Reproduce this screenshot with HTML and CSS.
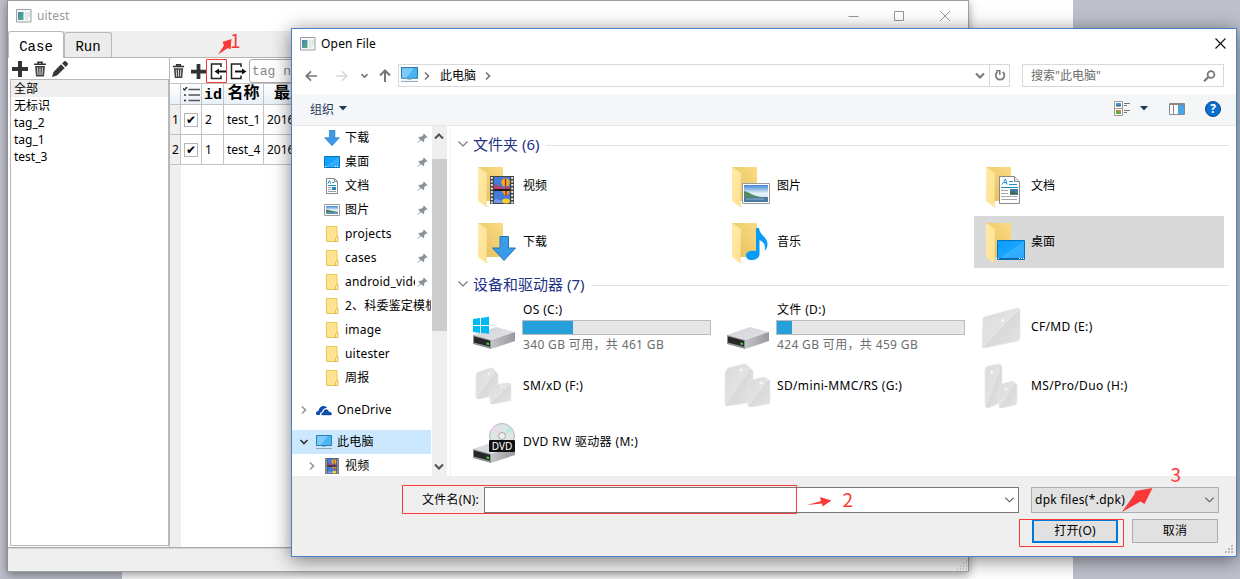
FILE: index.html
```html
<!DOCTYPE html>
<html lang="zh-CN">
<head>
<meta charset="utf-8">
<title>uitest</title>
<link rel="stylesheet" href="styles.css">
</head>
<body>
<svg width="0" height="0" class="defs">
  <defs>
    <linearGradient id="gFold" x1="0" y1="1" x2="1" y2="0"><stop offset="0" stop-color="#e3be5c"/><stop offset="1" stop-color="#fbdc83"/></linearGradient>
    <linearGradient id="gFlap" x1="0" y1="0" x2="1" y2="1"><stop offset="0" stop-color="#ffeaa9"/><stop offset="1" stop-color="#ffe18d"/></linearGradient>
    <linearGradient id="gBlue" x1="0" y1="0" x2="1" y2="1"><stop offset="0" stop-color="#0a9cff"/><stop offset=".5" stop-color="#18a3ff"/><stop offset=".52" stop-color="#35afff"/><stop offset="1" stop-color="#2ca8fb"/></linearGradient>
    <linearGradient id="gSky" x1="0" y1="0" x2="0" y2="1"><stop offset="0" stop-color="#3f86d8"/><stop offset=".5" stop-color="#e6f3f8"/><stop offset="1" stop-color="#bcd8e6"/></linearGradient>
    <linearGradient id="gCard" x1="0" y1="0" x2="1" y2="1"><stop offset="0" stop-color="#dadada"/><stop offset=".5" stop-color="#e3e3e3"/><stop offset=".52" stop-color="#d9d9d9"/><stop offset="1" stop-color="#e4e4e4"/></linearGradient>
    <linearGradient id="gTop" x1="0" y1="0" x2="1" y2="1"><stop offset="0" stop-color="#d2d4d8"/><stop offset="1" stop-color="#e2e3e6"/></linearGradient>
    <linearGradient id="gSide" x1="0" y1="0" x2="1" y2="0"><stop offset="0" stop-color="#c4c5c8"/><stop offset="1" stop-color="#97999c"/></linearGradient>
    <linearGradient id="gApp" x1="0" y1="0" x2="1" y2="1"><stop offset="0" stop-color="#4a7fb5"/><stop offset="1" stop-color="#58b27c"/></linearGradient>

    <symbol id="app" viewBox="0 0 16 14"><path d="M.5.5h14.500v12.500H.5z" fill="#f3f5f6" stroke="#9aa0a4"/><path d="M2 3h5.500v8H2z" fill="url(#gApp)"/><path d="M9 3h2.500v8H9z" fill="#dfe6e6"/><path d="M12.500 3h1v5h-1z" fill="#cfd6d6"/></symbol>
    <symbol id="pc" viewBox="0 0 16 16"><path d="M.5 1.500h15v10H.5z" fill="#48b6f5" stroke="#2c7fae"/><path d="M1 2h11L5 11H1z" fill="#7ecbf9"/><path d="M6 12h4v1H6z" fill="#8fb6cb"/><path d="M0 14.500h16" stroke="#8ea9b8"/></symbol>
    <symbol id="folderS" viewBox="0 0 16 16"><path d="M2.500.5h10.500v15H2.500z" fill="#ffe391" stroke="#edc552"/><path d="M13 10.500h1v5h-2.500v-3z" fill="#ffeeb5" stroke="#e5bb43"/></symbol>
    <symbol id="down" viewBox="0 0 24 25"><path d="M8 .5h8.500V12H23.500L12 24.500.5 12H8z" fill="#3b9be8" stroke="#2376bd"/></symbol>
    <symbol id="desk" viewBox="0 0 28 20"><path d="M.5.5h27v19H.5z" fill="url(#gBlue)" stroke="#0074bd"/><path d="M1 18.500h26" stroke="#0a66a8"/><path d="M1 18.500h1M22 18.500h1M24 18.500h1M26 18.500h1" stroke="#fff"/></symbol>
    <symbol id="pic" viewBox="0 0 28 21"><path d="M.5.5h27v20H.5z" fill="#fff" stroke="#9b9b9b"/><path d="M2 2h24v17H2z" fill="url(#gSky)"/><path d="M2 8c5 1 9 5 17 6H2z" fill="#4f8d5c"/><path d="M2 14h24v5H2z" fill="#4a7ba2"/><path d="M4 16h18" stroke="#87afc6"/></symbol>
    <symbol id="picS" viewBox="0 0 16 16"><path d="M.5 2.500h15v11H.5z" fill="#fff" stroke="#9b9b9b"/><path d="M2 4h12v8H2z" fill="url(#gSky)"/><path d="M2 7.500l4 1 8 1.500H2z" fill="#3f7d5c"/><path d="M2 10h12v2H2z" fill="#5f93b4"/></symbol>
    <symbol id="doc" viewBox="0 0 21 28"><path d="M.5.5h15l5 5v22H.5z" fill="#fff" stroke="#898989"/><path d="M15.500.5v5h5" fill="#e4e4e4" stroke="#898989"/><path d="M3 8.500 6.500 3l1.500 5.500M5 6.700h3M10 5.500h4M10 8.500h8M2 11.500h17" fill="none" stroke="#1b91d0"/><path d="M2 14.500h7M2 17.500h7M2 20.500h16M2 23.500h16" stroke="#a8a8a8"/><path d="M11 13h8v6h-8z" fill="#427aa0"/><path d="M11 16l3-1 5 3h-8z" fill="#3e6e45"/></symbol>
    <symbol id="docS" viewBox="0 0 16 16"><path d="M2.500.5h8l3 3v12h-11z" fill="#fff" stroke="#898989"/><path d="M10.500.5v3h3" fill="none" stroke="#898989"/><path d="M4 5.500l1.500-3 1 3M8 4.500h2M4 7.500h8" fill="none" stroke="#1b91d0"/><path d="M4 9.500h3M4 11.500h3M4 13.500h8" stroke="#a0a0a0"/><path d="M8 9h4v3H8z" fill="#2b86c4"/></symbol>
    <symbol id="film" viewBox="0 0 24 28"><path d="M0 0h24v28H0z" fill="#444"/><path d="M4 1h16v12H4zM4 15h16v12H4z" fill="#427bd8"/><path d="M1.800 1v27M22.200 1v27" stroke="#e6e6e6" stroke-width="2" stroke-dasharray="2 1.500"/><path d="M4 10c2-3 4 0 6 0l3 2 7-1v2H4z" fill="#be4364"/><path d="M4 24c3-2 6 0 8 1v2H4z" fill="#6f9be5"/><ellipse cx="15.500" cy="6.500" rx="4.200" ry="4.200" fill="#f2b21e"/><path d="M14.800 2.500h1.500v9h-1.500z" fill="#b72a26"/><path d="M12 15h8l-3 5h-2z" fill="#f0a628"/><path d="M15.300 15h1.500v5h-1.500z" fill="#b8231c"/><ellipse cx="16" cy="25" rx="4" ry="2.500" fill="#f6ce31"/><path d="M4 14h16" stroke="#111" stroke-width="1.500"/></symbol>
    <symbol id="note" viewBox="0 0 22 32"><path d="M10 0h3c1 8 8 8 8.500 16 0 3-1 5-3 7 1-4 1-8-5-11v14c0 4-4 6-8 6-3.500 0-5.500-2-5.500-4.500C0 24 4 22 10 23z" fill="#0a9cf5"/></symbol>
    <symbol id="folderL" viewBox="0 0 48 48"><path d="M8 5h25v34H8z" fill="url(#gFold)"/><path d="M8 5l9 6-.800 34L8 39z" fill="url(#gFlap)"/><path d="M17 11l-.800 34 2.800-1" fill="none" stroke="#ecd9a0" stroke-width=".6"/></symbol>
    <symbol id="drive" viewBox="0 0 48 48"><path d="M3 31l23-8 19 5-24 8z" fill="url(#gTop)"/><path d="M21 36l24-8v9l-24 8z" fill="url(#gSide)"/><path d="M3 31l18 5v9L3 40z" fill="#8e9093"/><path d="M4 32.500l16 4.300v6L4 38.500z" fill="#272727"/><path d="M16.500 38.500l2.500.6v2l-2.500-.6z" fill="#3ee632"/></symbol>
    <symbol id="pin" viewBox="0 0 12 12"><path d="M7.500.5l4 4-1 .6-.8-.3-2 2.200.2 2-1 1-2.500-2.500L1 11l-.5-.3 3-3.600L1.500 5l1-1 2.200.2L7 2.100l-.2-.8z" fill="#87929b"/></symbol>
    <symbol id="trash" viewBox="0 0 14 16"><path d="M1 3.200h12M5 3V1.300h4V3" fill="none" stroke="#333" stroke-width="1.600"/><path d="M2 5h10l-1 10.500H3z" fill="#444"/><path d="M4.500 6.500l.5 7.500M7 6.500V14M9.500 6.500L9 14" stroke="#ddd"/></symbol>
    <symbol id="plus" viewBox="0 0 16 16"><path d="M6 0h4v6h6v4h-6v6H6v-6H0V6h6z" fill="#333"/></symbol>
    <symbol id="pencil" viewBox="0 0 16 16"><path d="M0 16l1.500-5L9 3.300 12.700 7 5 14.500zM10 2.300L12 .5c.7-.6 1.300-.6 2 0L15.600 2c.6.700.6 1.300 0 2L13.700 6z" fill="#383838"/></symbol>
    <symbol id="chev" viewBox="0 0 10 10"><path d="M3 1.500L6.500 5 3 8.500" fill="none" stroke="currentColor" stroke-width="1.700"/></symbol>
    <symbol id="chevD" viewBox="0 0 12 8"><path d="M1.500 1.500L6 6l4.500-4.500" fill="none" stroke="currentColor" stroke-width="1.200"/></symbol>
    <symbol id="chevB" viewBox="0 0 12 8"><path d="M2 1.500L6 5.500l4-4" fill="none" stroke="currentColor" stroke-width="2"/></symbol>
    <symbol id="grip" viewBox="0 0 8 8"><path d="M6 0h2v2H6zM3 3h2v2H3zM6 3h2v2H6zM0 6h2v2H0zM3 6h2v2H3zM6 6h2v2H6z" fill="#bdbdbd"/></symbol>
    <symbol id="arrow" viewBox="0 0 16 14"><path d="M15 7H3M8 1.500L2.500 7 8 12.500" fill="none" stroke="currentColor" stroke-width="2"/></symbol>
  </defs>
</svg>

<main class="desktop">
  <div class="paper"></div>

  <section class="main-win">
    <header class="main-title">
      <svg class="app-icon"><use href="#app"/></svg><span>uitest</span>
      <svg class="win-btns" viewBox="0 0 102 12"><path d="M.5 6.500h10M46.500 1.500h9v9h-9zM92 1l10 10M102 1L92 11" fill="none" stroke="#999"/></svg>
    </header>
    <nav class="tabs"><div class="tab on">Case</div><div class="tab">Run</div></nav>
    <div class="work">
      <div class="tags">
        <div class="tools"><svg width="16" height="16"><use href="#plus"/></svg><svg width="14" height="16"><use href="#trash"/></svg><svg width="16" height="16"><use href="#pencil"/></svg></div>
        <ul class="tag-list"><li class="on">全部</li><li>无标识</li><li>tag_2</li><li>tag_1</li><li>test_3</li></ul>
      </div>
      <div class="cases">
        <div class="tools">
          <svg width="13" height="16"><use href="#trash"/></svg>
          <svg width="15" height="15"><use href="#plus"/></svg>
          <svg class="io" width="17" height="17" viewBox="0 0 17 17"><path d="M11 4V1H1.500v14.500H11v-3" fill="none" stroke="#222" stroke-width="1.500"/><path d="M16 8.500H7" stroke="#111" stroke-width="2"/><path d="M4.500 8.500l4.500-3v6z" fill="#111"/></svg>
          <svg class="io" width="17" height="17" viewBox="0 0 17 17"><path d="M11 4V1H1.500v14.500H11v-3" fill="none" stroke="#222" stroke-width="1.500"/><path d="M5 8.500h8" stroke="#111" stroke-width="2"/><path d="M16.500 8.500l-4.500-3v6z" fill="#111"/></svg>
          <div class="tag-input">tag name</div>
        </div>
        <div class="grid">
          <div class="h"></div><div class="h"><svg width="17" height="15" viewBox="0 0 17 15"><path d="M5.500 2.500H17M5.500 8H17M5.500 13.500H17" stroke="#555" stroke-width="1.600"/><path d="M0 1.500L1.500 3 4 0M1 8h2M1 13.500h2" fill="none" stroke="#333" stroke-width="1.500"/></svg></div><div class="h id">id</div><div class="h">名称</div><div class="h last">最后</div>
          <div class="n">1</div><div class="c"><i class="check">✔</i></div><div class="c">2</div><div class="c">test_1</div><div class="c">2016-</div>
          <div class="n">2</div><div class="c"><i class="check">✔</i></div><div class="c">1</div><div class="c">test_4</div><div class="c">2016-</div>
        </div>
        <div class="rest"></div>
      </div>
    </div>
    <footer class="status"><svg width="12" height="12" viewBox="0 0 12 12"><path d="M10 1h1M7 4h1M10 4h1M4 7h1M7 7h1M10 7h1M1 10h1M4 10h1M7 10h1M10 10h1" stroke="#aaa"/></svg></footer>
  </section>

  <section class="dialog">
    <header class="dlg-title"><svg class="app-icon"><use href="#app"/></svg><span>Open File</span><svg class="close" width="11" height="11" viewBox="0 0 11 11"><path d="M.5.5l10 10M10.500.5l-10 10" stroke="#111" stroke-width="1.100"/></svg></header>
    <div class="address">
      <svg class="back" width="14" height="12"><use href="#arrow"/></svg>
      <svg class="fwd" width="14" height="12"><use href="#arrow"/></svg>
      <svg class="recent" width="9" height="6"><use href="#chevB"/></svg>
      <svg class="up" width="12" height="13" viewBox="0 0 12 13"><path d="M6 13V2M1 6.500l5-5 5 5" fill="none" stroke="#757575" stroke-width="2"/></svg>
      <div class="path"><svg width="17" height="17"><use href="#pc"/></svg><svg class="sep" width="10" height="10"><use href="#chev"/></svg><span>此电脑</span><svg class="sep" width="10" height="10"><use href="#chev"/></svg><svg class="drop" width="12" height="8"><use href="#chevB"/></svg><div class="refresh"><svg width="12" height="13" viewBox="0 0 12 13"><path d="M8.700 3A4.300 4.300 0 1 1 3.500 3" fill="none" stroke="#777" stroke-width="1.700"/><path d="M2 1.800h3.800V6" fill="none" stroke="#777" stroke-width="1.500"/></svg></div></div>
      <div class="search"><span>搜索"此电脑"</span><svg width="13" height="12" viewBox="0 0 13 12"><circle cx="8" cy="4.500" r="3.400" fill="none" stroke="#777" stroke-width="1.800"/><path d="M5.500 7L1 11.300" stroke="#777" stroke-width="2"/></svg></div>
    </div>
    <div class="bar"><span>组织</span><svg width="8" height="5" viewBox="0 0 8 5"><path d="M0 0h8L4 4.500z" fill="#1e395b"/></svg>
      <svg class="views" width="16" height="15" viewBox="0 0 16 15"><path d="M.5.5h8v14h-8zM.5 7.500h8" fill="#fff" stroke="#999"/><path d="M2 2h5v2H2z" fill="#4b93df"/><path d="M2 4h5v1.500H2z" fill="#356d5c"/><path d="M2 9h5v4H2z" fill="#64a744"/><path d="M4.500 9H7v2H4.500z" fill="#df7a4b"/><path d="M10 2.500h6M10 4.500h3M10 9.500h6M10 11.500h3" stroke="#777"/></svg>
      <svg class="vdrop" width="8" height="5" viewBox="0 0 8 5"><path d="M0 0h8L4 4.500z" fill="#1e395b"/></svg>
      <svg class="preview" width="16" height="12" viewBox="0 0 16 12"><path d="M.5.5h15v11H.5zM.5 1.500h15M4.500 2v9" fill="#fff" stroke="#888"/><path d="M9 2h6v9H9z" fill="#4ba3e8"/></svg>
      <svg class="help" width="16" height="16" viewBox="0 0 16 16"><circle cx="8" cy="8" r="7.500" fill="#0b6fce" stroke="#0a4a87"/><text x="8" y="12.300" text-anchor="middle">?</text></svg>
    </div>

    <div class="body">
      <aside class="side">
        <div class="item"><svg><use href="#down"/></svg><span>下载</span><svg class="pin"><use href="#pin"/></svg></div>
        <div class="item"><svg viewBox="0 0 16 16"><path d="M.5 2.500h15v11H.5z" fill="url(#gBlue)" stroke="#0074bd"/><path d="M1 12.500h1M11 12.500h1M13 12.500h1" stroke="#fff"/></svg><span>桌面</span><svg class="pin"><use href="#pin"/></svg></div>
        <div class="item"><svg><use href="#docS"/></svg><span>文档</span><svg class="pin"><use href="#pin"/></svg></div>
        <div class="item"><svg><use href="#picS"/></svg><span>图片</span><svg class="pin"><use href="#pin"/></svg></div>
        <div class="item"><svg><use href="#folderS"/></svg><span>projects</span><svg class="pin"><use href="#pin"/></svg></div>
        <div class="item"><svg><use href="#folderS"/></svg><span>cases</span><svg class="pin"><use href="#pin"/></svg></div>
        <div class="item"><svg><use href="#folderS"/></svg><span>android_video</span><svg class="pin"><use href="#pin"/></svg></div>
        <div class="item"><svg><use href="#folderS"/></svg><span>2、科委鉴定模板</span></div>
        <div class="item"><svg><use href="#folderS"/></svg><span>image</span></div>
        <div class="item"><svg><use href="#folderS"/></svg><span>uitester</span></div>
        <div class="item"><svg><use href="#folderS"/></svg><span>周报</span></div>
        <div class="item top"><svg class="tw"><use href="#chev"/></svg><svg viewBox="0 0 16 16"><path d="M1 13c-2-1-1-4 1.500-4C3 5 8 2 11 6c-3 0-5 2-5 4-2 0-2.500 2-2 3z" fill="#0d4da8"/><path d="M6 13.500c-2-1-.500-3.500 1-3.200C7.500 6 12.500 6 13 9.500c3 0 4 3 2 4z" fill="#0d4da8" stroke="#fff" stroke-width=".6"/></svg><span>OneDrive</span></div>
        <div class="item top sel"><svg class="tw open"><use href="#chev"/></svg><svg><use href="#pc"/></svg><span>此电脑</span></div>
        <div class="item sub"><svg class="tw"><use href="#chev"/></svg><svg><use href="#film"/></svg><span>视频</span></div>
      </aside>
      <div class="scroll"><svg class="flip" width="12" height="8"><use href="#chevB"/></svg><div class="thumb"></div><svg width="12" height="8"><use href="#chevB"/></svg></div>
      <div class="files">
        <h2><svg><use href="#chevD"/></svg>文件夹 (6)</h2>
        <div class="tiles folders">
          <div class="tile"><svg><use href="#folderL"/><use href="#film" x="20" y="14" width="24" height="28"/></svg><span>视频</span></div>
          <div class="tile"><svg><use href="#folderL"/><use href="#pic" x="18" y="21" width="28" height="21"/></svg><span>图片</span></div>
          <div class="tile"><svg><use href="#folderL"/><use href="#doc" x="21" y="14" width="21" height="28"/></svg><span>文档</span></div>
          <div class="tile"><svg><use href="#folderL"/><use href="#down" x="22" y="18" width="24" height="25"/></svg><span>下载</span></div>
          <div class="tile"><svg><use href="#folderL"/><use href="#note" x="22" y="10" width="22" height="32"/></svg><span>音乐</span></div>
          <div class="tile sel"><svg><use href="#folderL"/><use href="#desk" x="19" y="22" width="28" height="20"/></svg><span>桌面</span></div>
        </div>
        <h2 class="second"><svg><use href="#chevD"/></svg>设备和驱动器 (7)</h2>
        <div class="tiles drives">
          <div class="tile"><svg><use href="#drive"/><path d="M3 15l7-1v7H3zM11 13.900l8-1.100V21h-8zM3 22h7v7l-7-1zM11 22h8v7.800l-8-.9z" fill="#00b9f2"/></svg><div class="usage"><span>OS (C:)</span><div class="meter"><i style="width:26.500%"></i></div><small>340 GB 可用，共 461 GB</small></div></div>
          <div class="tile"><svg><use href="#drive"/></svg><div class="usage"><span>文件 (D:)</span><div class="meter"><i style="width:8%"></i></div><small>424 GB 可用，共 459 GB</small></div></div>
          <div class="tile"><svg class="card"><path d="M5 15Q4 14 6 13L39 4q3-.500 3 2v29q0 1-2 2L6 44q-2 0-2-2z"/><path d="M22.500 18l2-4 2 3z" class="mk"/></svg><span>CF/MD (E:)</span></div>
          <div class="tile"><svg class="card"><path d="M6 14q0-2 2-4l12-4h3l5 6v21L9 37q-3 0-3-2z"/><path d="M20 27q0-3 3-4l15-2q3 0 3 3v13q0 2-2 2l-16 3q-3 0-3-2z"/><path d="M17 13l1.500-3 2 3zM30 26l1.500-3 1.500 2z" class="mk"/></svg><span>SM/xD (F:)</span></div>
          <div class="tile"><svg class="card"><path d="M1 12q0-3 3-6L19 2h3l7 7v31L4 44q-3 0-3-2z"/><path d="M24 23q0-4 3-5l13-3 6 4v21q0 2-2 2l-17 3q-3 0-3-2z"/><path d="M15 9l2-3 2 3zM35 22l2-3 2 3z" class="mk"/></svg><span>SD/mini-MMC/RS (G:)</span></div>
          <div class="tile"><svg class="card"><path d="M7 8q0-3 3-4l11-2q3 0 3 3v35L10 46q-3 0-3-3z"/><path d="M21 27q0-4 3-5l10-3 5 3v18q0 2-2 3l-13 3q-3 0-3-2z"/><path d="M12 12l1.500-4 2 3zM26 28l2-3 2 3z" class="mk"/></svg><span>MS/Pro/Duo (H:)</span></div>
          <div class="tile"><svg class="dvd"><use href="#drive"/><circle cx="32" cy="18" r="12.500" fill="#dfe5e4" stroke="#b1b7b8"/><path d="M32 18L21 12l3-4z" fill="#eed6ee"/><path d="M32 18l7-10 4 5z" fill="#bce9db"/><circle cx="32" cy="18" r="3.500" fill="#eee" stroke="#aaa"/><rect x="19" y="22" width="26" height="12" rx="1" fill="#111"/><text x="32" y="31.500" text-anchor="middle">DVD</text></svg><span>DVD RW 驱动器 (M:)</span></div>
        </div>
      </div>
    </div>
    <footer class="foot">
      <div class="frow"><label>文件名(N):</label><div class="combo name"><svg><use href="#chevD"/></svg></div><div class="combo type"><span>dpk files(*.dpk)</span><svg><use href="#chevD"/></svg></div></div>
      <div class="frow acts"><div class="btn primary">打开(O)</div><div class="btn">取消</div></div>
      <svg class="dgrip" width="8" height="8"><use href="#grip"/></svg>
    </footer>
  </section>

  <svg class="notes" viewBox="0 0 1240 579">
    <path d="M206.500 59.500h20v23h-20zM402.500 485.500h394v28h-394zM1019.500 519.500h104v27h-104z" fill="none" stroke="#fb3838"/>
    <path d="M218 54.500l6-9-1.500-3.500 9-3-1 10.500-2.500-1.500zM807 505l14-4-1-4 11.500 3.500-9 6-.5-3zM1122 512l12-17 1.500-4 17-3-8 16-4-2.500z" fill="#fb3838"/>
    <text x="230" y="47.500">1</text><text x="842.500" y="507">2</text><text x="1170.500" y="482">3</text>
  </svg>
</main>
</body>
</html>
```
FILE: styles.css
```css
* { box-sizing: border-box; }
body { margin: 0; font: 12px/16px "Noto Sans", "Noto Sans CJK SC", sans-serif; color: #000; }
svg { display: block; flex: none; }
.defs { position: absolute; }
.desktop { position: relative; width: 1240px; height: 579px; overflow: hidden; background: #bec1cc; }
.paper { position: absolute; left: 122px; top: 0; width: 951px; height: 579px; background: #fff; }
.app-icon { width: 16px; height: 14px; }

.main-win { position: absolute; left: 7px; top: 0; width: 962px; height: 572px; display: flex; flex-direction: column; background: #efefef; border: 1px solid #a0a0a0; border-left-color: #8e8f96; box-shadow: 0 3px 9px rgba(0,0,0,.4); }
.main-title { height: 30px; flex: none; background: #fff; display: flex; align-items: center; padding: 0 18px 0 8px; color: #999; letter-spacing: .15px; }
.main-title span { margin-left: 5px; }
.win-btns { width: 102px; height: 12px; margin-left: auto; }
.tabs { height: 27px; flex: none; display: flex; align-items: flex-end; border-bottom: 1px solid #b5b5b5; font: 14px/22px "Liberation Mono", monospace; }
.tab { height: 25px; width: 48px; border: 1px solid #b9b9b9; border-bottom: 0; border-radius: 3px 3px 0 0; background: #ececec; text-align: center; line-height: 29px; }
.tab.on { width: 56px; height: 27px; margin-bottom: -1px; background: #fff; line-height: 30px; }
.work { flex: 1; min-height: 0; display: flex; background: #fff; border-bottom: 1px solid #a8a8a8; }
.tags { width: 161px; padding: 0 0 1px 2px; display: flex; flex-direction: column; }
.tags .tools { height: 21px; display: flex; gap: 6px; padding: 3px 0 0 2px; }
.tags .tools svg + svg { margin-left: -1px; }
.tags .tools svg:last-child { margin-left: -1px; }
.tag-list { flex: 1; margin: 0; padding: 0; list-style: none; border: 1px solid #b8b8b8; }
.tag-list li { height: 17px; line-height: 17px; padding-left: 3px; }
.tag-list li.on { background: #efefef; }
.cases { flex: 1; min-width: 0; display: flex; flex-direction: column; border-left: 1px solid #b8b8b8; }
.cases .tools { height: 25px; flex: none; display: flex; align-items: center; padding: 1px 0 0 2px; gap: 4px; }
.cases .tools svg:nth-child(2) { margin-left: 2px; }
.cases .tools .io { margin-left: 0; }
.cases .tools .io + .io { margin-left: -1px; }
.tag-input { width: 200px; height: 24px; margin-left: -2px; border: 1px solid #aaa; border-radius: 3px; padding-left: 2px; font: 13px/24px "Liberation Mono", monospace; color: #888; }
.grid { display: grid; grid-template-columns: 11px 21px 22px 40px 140px; grid-template-rows: 21px 30px 30px; border-top: 1px solid #c3c3c3; }
.grid > div { border: solid #c3c3c3; border-width: 0 1px 1px 0; display: flex; align-items: center; overflow: hidden; }
.grid .h { background: linear-gradient(#fff, #e9f0f8); justify-content: center; font: bold 16px/20px "Liberation Mono", "Noto Sans CJK SC", monospace; white-space: nowrap; }
.grid .id { padding: 3px 0 0 1px; font-size: 15px; }
.grid .last { justify-content: flex-start; padding-left: 10px; }
.grid .n { background: #efefef; padding-left: 2px; }
.grid .c { padding-left: 3px; }
.check { width: 14px; height: 14px; border: 1px solid #b5b5b5; font: 12px/12px "DejaVu Sans", sans-serif; text-align: center; }
.rest { width: 11px; flex: 1; background: #efefef; }
.status { height: 23px; flex: none; display: flex; justify-content: flex-end; align-items: flex-end; border-top: 1px solid #d5d5d5; }

.dialog { position: absolute; left: 291px; top: 28px; width: 946px; height: 529px; display: flex; flex-direction: column; border: 1px solid #4a80c8; background: #fff; box-shadow: 0 3px 18px rgba(0,0,0,.5); letter-spacing: .2px; }
.dlg-title { height: 29px; flex: none; display: flex; align-items: center; padding: 0 10px 0 8px; }
.dlg-title span { margin-left: 5px; }
.close { margin-left: auto; }
.address { height: 36px; flex: none; display: flex; align-items: center; padding: 0 12px 1px 12px; color: #757575; }
.back { color: #757575; }
.fwd { color: #d8d8d8; transform: scaleX(-1); margin-left: 17px; }
.recent { margin-left: 11px; }
.up { margin: 0 7px 0 10px; }
.path { width: 612px; height: 23px; border: 1px solid #d9d9d9; display: flex; align-items: center; padding-left: 2px; color: #000; letter-spacing: 0; }
.path > svg:first-child { margin-bottom: 2px; }
.sep { margin-left: 4px; color: #757575; }
.path span { margin: 0 0 0 8px; }
.path .sep ~ .sep { margin-left: 7px; }
.drop { margin-left: auto; margin-right: 3px; color: #777; }
.refresh { width: 20px; height: 21px; border-left: 1px solid #d9d9d9; display: grid; place-items: center; }
.search { width: 202px; height: 23px; margin-left: auto; border: 1px solid #d9d9d9; display: flex; align-items: center; justify-content: space-between; padding: 0 7px 0 8px; color: #6d6d6d; letter-spacing: 0; }
.bar { height: 32px; flex: none; display: flex; align-items: center; padding: 0 15px 2px 18px; background: #f5f6f7; border-bottom: 1px solid #e6e7e8; color: #1e395b; letter-spacing: 0; }
.bar span { padding-top: 2px; }
.bar span + svg { margin-left: 5px; }
.views { margin-left: auto; }
.vdrop { margin-left: 10px; }
.preview { margin-left: 21px; }
.help { margin-left: 20px; }
.help text { font: bold 12px "Open Sans", sans-serif; fill: #fff; }

.body { height: 350px; flex: none; display: flex; }
.side { width: 140px; padding-right: 1px; overflow: hidden; }
.item { height: 24px; display: flex; align-items: center; padding-left: 32px; white-space: nowrap; }
.item > svg { width: 16px; height: 16px; }
.item span { margin-left: 5px; overflow: hidden; }
.item .pin { width: 11px; height: 11px; margin-left: auto; margin-right: 3px; }
.item:has(.pin) span { max-width: 70px; }
.item.top { padding-left: 7px; margin-top: 8px; }
.item.sub { padding-left: 15px; }
.item .tw { width: 10px; height: 10px; margin-right: 7px; color: #999; }
.item .tw.open { transform: rotate(90deg); color: #333; }
.sel { background: #cce8ff; }
.scroll { width: 15px; display: flex; flex-direction: column; align-items: center; background: #efefef; color: #505050; padding: 6px 1px 5px 0; }
.flip { transform: scaleY(-1); }
.thumb { width: 15px; height: 172px; margin: 19px -1px auto 0; background: #cdcdcd; }
.files { flex: 1; margin-left: 3px; border-left: 1px solid #f1f1f1; padding: 9px 7px 0 6px; }
h2 { height: 18px; margin: 0; display: flex; align-items: center; font: 15px/18px "Noto Sans", "Noto Sans CJK SC", sans-serif; color: #1e3287; letter-spacing: 0; }
h2 svg { width: 12px; height: 8px; margin-right: 4px; color: #777; }
h2::after { content: ""; flex: 1; height: 1px; margin: 2px 0 0 7px; background: #e2e2e2; }
.tiles { display: grid; grid-template-columns: repeat(3, 250px); grid-auto-rows: 52px; gap: 4px; padding: 7px 0 0 9px; }
.second { margin-top: 7px; }
.drives { padding-top: 7px; grid-template-rows: 55px 52px 52px; letter-spacing: .35px; }
.drives .tile:nth-child(n+4) { padding-top: 2px; }
.tile { display: flex; align-items: center; padding-left: 4px; }
.tile > svg { width: 48px; height: 48px; }
.tile > span { margin: 0 0 0 5px; }
.folders { letter-spacing: 0; }
.tile:nth-child(3) > span { padding-bottom: 1px; }
.folders .tile:nth-child(3) > span { padding-bottom: 0; }
.tile.sel { background: #d9d9d9; }
.usage { width: 189px; margin-left: 4px; display: flex; flex-direction: column; }
.usage span, .usage small { padding-left: 1px; font-size: 12px; }
.usage small { color: #6d6d6d; }
.meter { height: 15px; margin: 2px 0; border: 1px solid #bcbcbc; background: #e6e6e6; display: flex; }
.meter i { background: #26a0da; }
.card { fill: url(#gCard); stroke: #e5e5e5; stroke-width: .6; }
.card .mk { fill: #fff; }
.dvd text { font: 10px "Noto Sans", sans-serif; fill: #fff; letter-spacing: 0; }

.foot { position: relative; flex: 1; background: #efefef; padding: 11px 17px 0 0; }
.frow { display: flex; align-items: center; justify-content: flex-end; }
.frow label { margin-right: 5px; }
.combo { display: flex; align-items: center; justify-content: space-between; border: 1px solid #7a7a7a; background: #fff; padding: 0 3px; }
.combo svg { width: 11px; height: 8px; color: #555; }
.name { width: 535px; height: 26px; justify-content: flex-end; }
.type { width: 188px; height: 26px; margin-left: 12px; background: #e1e1e1; border-color: #adadad; letter-spacing: .3px; }
.acts { margin-top: 6px; gap: 14px; padding-right: 1px; }
.btn { width: 86px; height: 24px; border: 1px solid #adadad; background: #e1e1e1; display: grid; place-items: center; }
.btn.primary { border: 2px solid #0078d7; }
.dgrip { position: absolute; right: 3px; bottom: 3px; }
.notes { position: absolute; left: 0; top: 0; width: 1240px; height: 579px; pointer-events: none; }
.notes text { font: 19px "Noto Sans CJK SC", sans-serif; fill: #fb3838; }
```
